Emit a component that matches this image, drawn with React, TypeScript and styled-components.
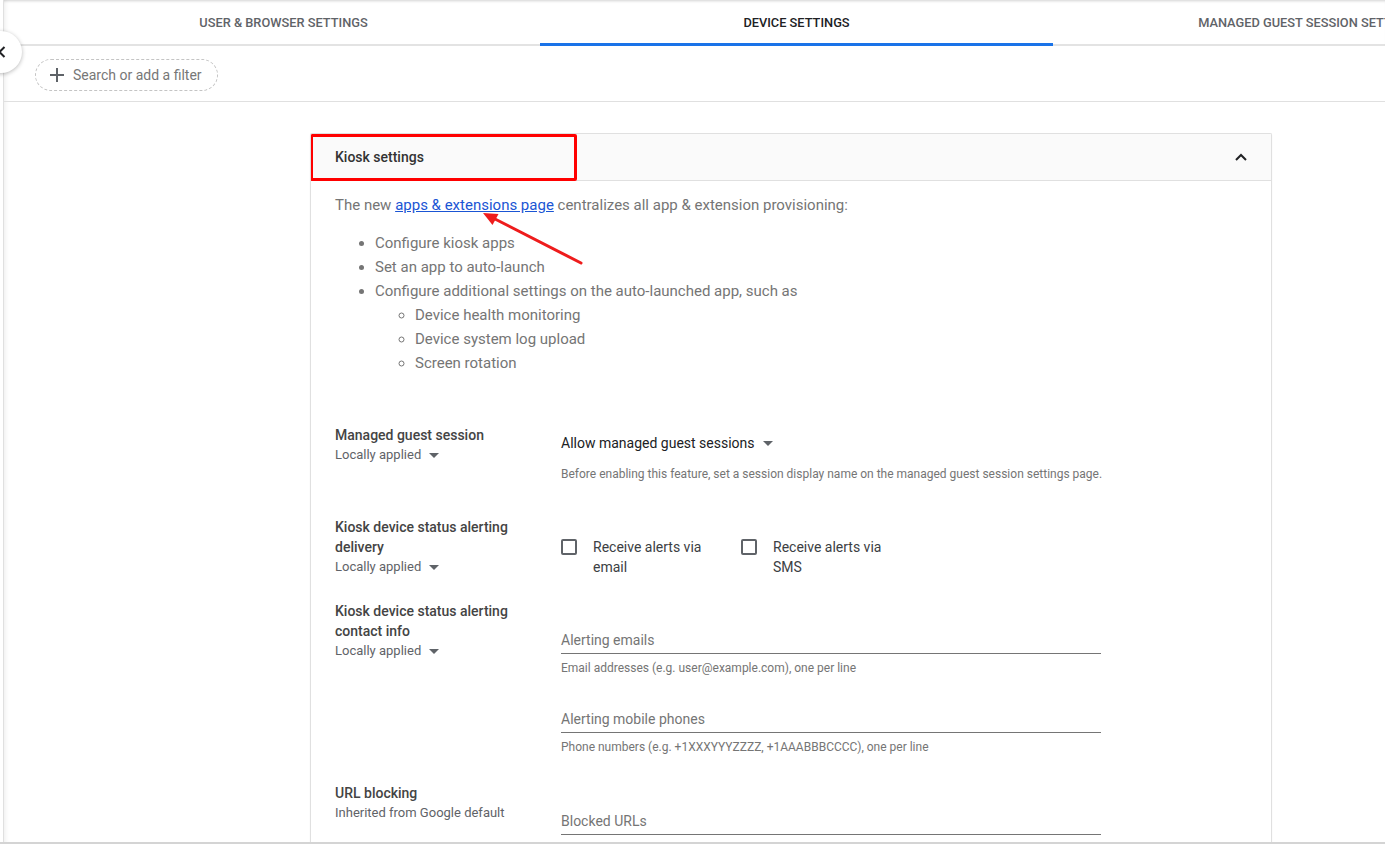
import React from 'react'
import styled, { createGlobalStyle } from 'styled-components'

const GlobalStyle = createGlobalStyle`
  html, body {
    margin: 0;
    padding: 0;
    overflow: hidden;
    background: #ffffff;
    font-family: Roboto, 'Noto Sans', Arial, sans-serif;
  }
  * {
    box-sizing: border-box;
  }
`

const Shell = styled.div`
  position: relative;
  display: flex;
  height: 844px;
  border-bottom: 2px solid #d4d4d4;
  overflow: hidden;
`

const Rail = styled.div`
  flex: 0 0 4px;
  border-right: 1px solid #e0e0e0;
`

const Main = styled.div`
  flex: 1;
  display: flex;
  flex-direction: column;
  min-width: 0;
  box-shadow: inset 5px 0 5px -4px rgba(0, 0, 0, 0.08);
`

const BackButton = styled.button`
  position: absolute;
  top: 31px;
  left: -20px;
  width: 42px;
  height: 42px;
  padding: 0 0 0 18px;
  border: none;
  border-radius: 50%;
  background: #ffffff;
  box-shadow: 0 1px 4px rgba(0, 0, 0, 0.28);
  display: flex;
  align-items: center;
  z-index: 2;
`

const TabBar = styled.div`
  flex: 0 0 46px;
  display: flex;
  padding-left: 23px;
  box-shadow: inset 0 3px 3px -2px rgba(0, 0, 0, 0.18), inset 0 -2px 0 #e3e3e3;
`

const Tab = styled.div<{ $active?: boolean }>`
  flex: 0 0 513px;
  display: flex;
  align-items: center;
  justify-content: center;
  padding-top: 1px;
  border-bottom: 3px solid ${(p) => (p.$active ? '#1a73e8' : 'transparent')};
  font-size: 12.8px;
  font-weight: 500;
  text-transform: uppercase;
  white-space: nowrap;
  color: ${(p) => (p.$active ? '#202124' : '#5f6368')};
`

const FilterBar = styled.div`
  flex: 0 0 56px;
  padding: 13px 0 0 31px;
  border-bottom: 1px solid #e0e0e0;
`

const Chip = styled.div`
  display: inline-flex;
  align-items: center;
  gap: 9px;
  width: 183px;
  height: 32px;
  padding: 0 14px;
  border: 1px dashed #c4c4c4;
  border-radius: 16px;
  font-size: 14px;
  color: #777777;
`

const Content = styled.div`
  flex: 1;
  min-height: 0;
  padding: 31px 0 0 306px;
`

const Card = styled.section`
  position: relative;
  width: 962px;
  height: 100%;
  border: 1px solid #e0e0e0;
  border-bottom: none;
  border-radius: 2px 2px 0 0;
  box-shadow: 0 1px 2px rgba(0, 0, 0, 0.05);
  overflow: hidden;
`

const CardHeader = styled.header`
  height: 47px;
  display: flex;
  align-items: center;
  justify-content: space-between;
  padding: 0 24px;
  background: #fafafa;
  border-bottom: 1px solid #e0e0e0;
`

const CardTitle = styled.h2`
  margin: 0;
  font-size: 14px;
  font-weight: 500;
  color: #333333;
`

const Highlight = styled.div`
  position: absolute;
  top: 0;
  left: -1px;
  width: 267px;
  height: 47px;
  border: 3px solid #ff0000;
  border-radius: 2px;
  pointer-events: none;
`

const Pointer = styled.svg`
  position: absolute;
  top: 72px;
  left: 165px;
  pointer-events: none;
`

const CardBody = styled.div`
  padding: 14px 24px 0;
`

const Intro = styled.p`
  margin: 0;
  font-size: 15px;
  line-height: 20px;
  color: #757575;

  a {
    color: #1a55d4;
    text-decoration: underline;
  }
`

const BulletList = styled.ul<{ $nested?: boolean }>`
  margin: ${(p) => (p.$nested ? '0' : '16px 0 0')};
  padding-left: 40px;
  list-style: ${(p) => (p.$nested ? 'circle' : 'disc')};
  font-size: 15px;
  line-height: 24px;
  color: #757575;
`

const SettingRow = styled.div<{ $top: number }>`
  display: grid;
  grid-template-columns: 226px 1fr;
  margin-top: ${(p) => p.$top}px;
`

const LabelBlock = styled.div`
  width: 186px;
`

const LabelTitle = styled.div`
  font-size: 14px;
  font-weight: 500;
  line-height: 20px;
  color: #444444;
`

const LabelSource = styled.div`
  display: flex;
  align-items: center;
  gap: 8px;
  font-size: 13px;
  line-height: 20px;
  color: #5f6368;
`

const Control = styled.div<{ $offset: number }>`
  padding-top: ${(p) => p.$offset}px;
`

const SelectValue = styled.div`
  display: inline-flex;
  align-items: center;
  gap: 8px;
  font-size: 14px;
  line-height: 20px;
  color: #202124;
`

const Help = styled.div<{ $top: number }>`
  margin-top: ${(p) => p.$top}px;
  font-size: 12px;
  line-height: 16px;
  color: #757575;
  white-space: nowrap;
`

const CheckGroup = styled.div`
  display: flex;
`

const CheckItem = styled.label`
  display: flex;
  gap: 16px;
  width: 180px;
`

const CheckBox = styled.span`
  flex: 0 0 16px;
  height: 16px;
  margin-top: 2px;
  border: 2px solid #5f6368;
  border-radius: 2px;
`

const CheckText = styled.span`
  width: 128px;
  font-size: 14px;
  line-height: 20px;
  color: #3c4043;
`

const Field = styled.div<{ $top?: number }>`
  width: 540px;
  margin-top: ${(p) => p.$top ?? 0}px;
`

const FieldInput = styled.div`
  padding-bottom: 3px;
  border-bottom: 1px solid #757575;
  font-size: 14px;
  line-height: 20px;
  color: #757575;
`

const Caret = () => (
  <svg width="10" height="5" viewBox="0 0 10 5">
    <polygon points="0,0 10,0 5,5" fill="#5f6368" />
  </svg>
)

const Source = ({ text }: { text: string }) => (
  <LabelSource>
    {text}
    {text === 'Locally applied' && <Caret />}
  </LabelSource>
)

export default function App() {
  return (
    <>
      <GlobalStyle />
      <Shell>
        <BackButton aria-label="Back">
          <svg width="8" height="12" viewBox="0 0 8 12">
            <path d="M6.5 1 L1.5 6 L6.5 11" stroke="#202124" strokeWidth="2" fill="none" />
          </svg>
        </BackButton>
        <Rail />
        <Main>
          <TabBar>
            <Tab>User &amp; browser settings</Tab>
            <Tab $active>Device settings</Tab>
            <Tab>Managed guest session settings</Tab>
          </TabBar>

          <FilterBar>
            <Chip>
              <svg width="14" height="14" viewBox="0 0 14 14">
                <path d="M7 0 V14 M0 7 H14" stroke="#5f6368" strokeWidth="2" />
              </svg>
              Search or add a filter
            </Chip>
          </FilterBar>

          <Content>
            <Card>
              <CardHeader>
                <CardTitle>Kiosk settings</CardTitle>
                <svg width="12" height="8" viewBox="0 0 12 8">
                  <path d="M1 7 L6 2 L11 7" stroke="#202124" strokeWidth="2" fill="none" />
                </svg>
              </CardHeader>
              <Highlight />
              <Pointer width="120" height="64" viewBox="0 0 120 64">
                <line x1="105" y1="57" x2="19" y2="13" stroke="#ee1c1c" strokeWidth="3" strokeLinecap="round" />
                <polygon points="7,7 22.5,8 16.5,19" fill="#ee1c1c" />
              </Pointer>

              <CardBody>
                <Intro>
                  The new <a href="#apps">apps &amp; extensions page</a> centralizes all app &amp; extension
                  provisioning:
                </Intro>
                <BulletList>
                  <li>Configure kiosk apps</li>
                  <li>Set an app to auto-launch</li>
                  <li>
                    Configure additional settings on the auto-launched app, such as
                    <BulletList $nested>
                      <li>Device health monitoring</li>
                      <li>Device system log upload</li>
                      <li>Screen rotation</li>
                    </BulletList>
                  </li>
                </BulletList>

                <SettingRow $top={50}>
                  <LabelBlock>
                    <LabelTitle>Managed guest session</LabelTitle>
                    <Source text="Locally applied" />
                  </LabelBlock>
                  <Control $offset={8}>
                    <SelectValue>
                      Allow managed guest sessions
                      <Caret />
                    </SelectValue>
                    <Help $top={13}>
                      Before enabling this feature, set a session display name on the managed guest session
                      settings page.
                    </Help>
                  </Control>
                </SettingRow>

                <SettingRow $top={35}>
                  <LabelBlock>
                    <LabelTitle>Kiosk device status alerting delivery</LabelTitle>
                    <Source text="Locally applied" />
                  </LabelBlock>
                  <Control $offset={20}>
                    <CheckGroup>
                      <CheckItem>
                        <CheckBox />
                        <CheckText>Receive alerts via email</CheckText>
                      </CheckItem>
                      <CheckItem>
                        <CheckBox />
                        <CheckText>Receive alerts via SMS</CheckText>
                      </CheckItem>
                    </CheckGroup>
                  </Control>
                </SettingRow>

                <SettingRow $top={24}>
                  <LabelBlock>
                    <LabelTitle>Kiosk device status alerting contact info</LabelTitle>
                    <Source text="Locally applied" />
                  </LabelBlock>
                  <Control $offset={29}>
                    <Field>
                      <FieldInput>Alerting emails</FieldInput>
                      <Help $top={6}>Email addresses (e.g. user@example.com), one per line</Help>
                    </Field>
                    <Field $top={33}>
                      <FieldInput>Alerting mobile phones</FieldInput>
                      <Help $top={6}>Phone numbers (e.g. +1XXXYYYZZZZ, +1AAABBBCCCC), one per line</Help>
                    </Field>
                  </Control>
                </SettingRow>

                <SettingRow $top={28}>
                  <LabelBlock>
                    <LabelTitle>URL blocking</LabelTitle>
                    <Source text="Inherited from Google default" />
                  </LabelBlock>
                  <Control $offset={28}>
                    <Field>
                      <FieldInput>Blocked URLs</FieldInput>
                      <Help $top={6}>
                        Any URL in the URL blocklist will be blocked, unless it also appears in the URL
                        blocklist exceptions.
                      </Help>
                    </Field>
                  </Control>
                </SettingRow>
              </CardBody>
            </Card>
          </Content>
        </Main>
      </Shell>
    </>
  )
}
